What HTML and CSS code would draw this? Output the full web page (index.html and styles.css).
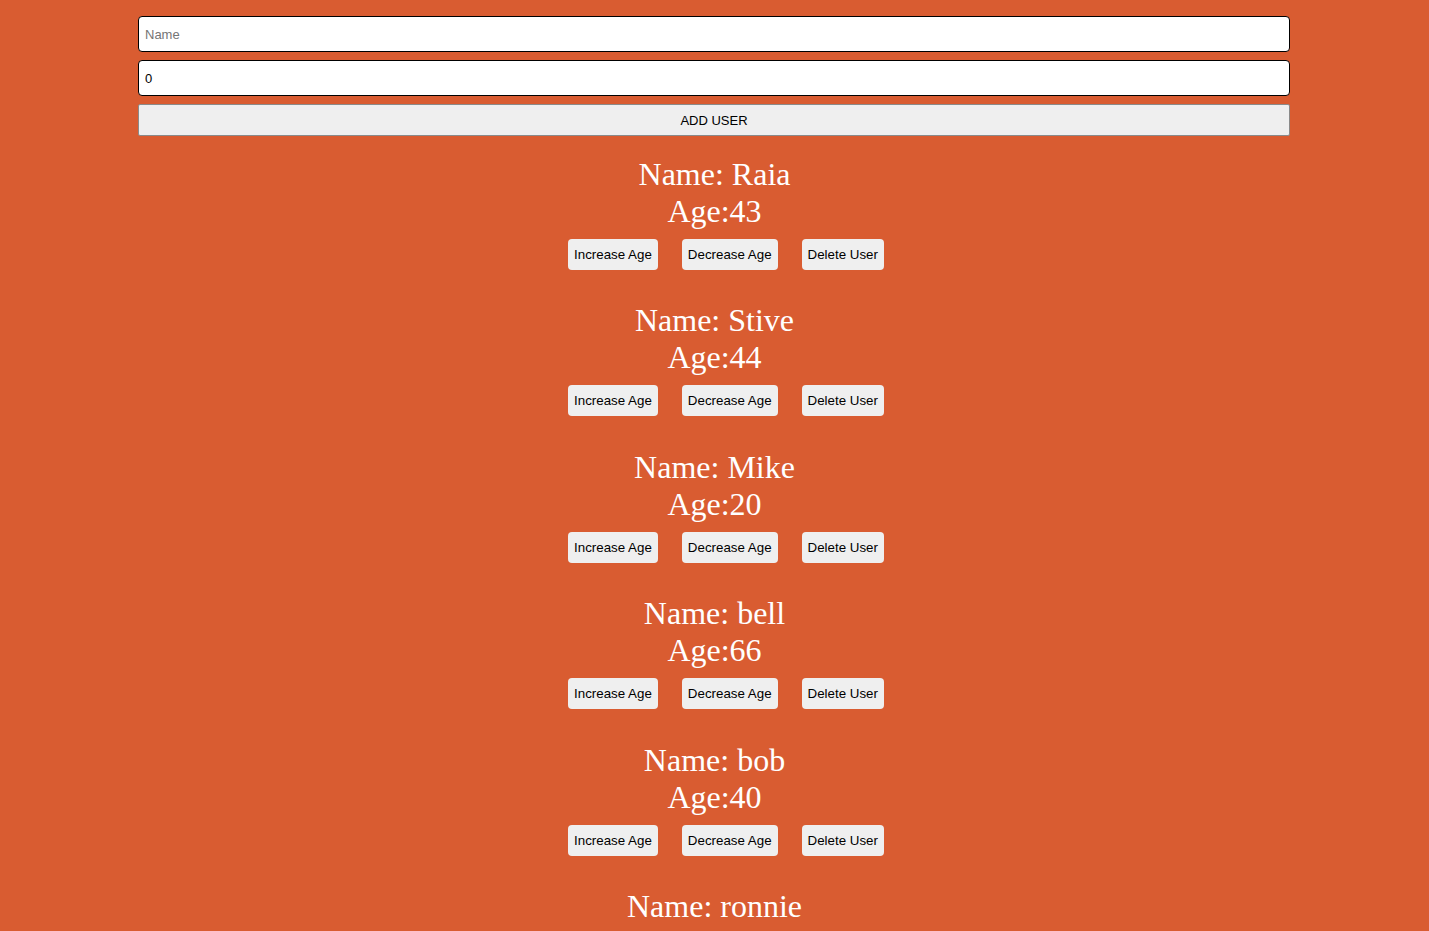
FILE: index.html
```html
<!DOCTYPE html>
<html>
<head>
<meta charset="utf-8">
<link rel="stylesheet" href="styles.css">
</head>
<body>
<div class="app">
  <form class="form">
    <input class="field" type="text" placeholder="Name">
    <input class="field" type="number" value="0">
    <button class="add" type="button">ADD USER</button>
  </form>
  <div class="users">
    <div class="user">
      <div class="line">Name: Raia</div>
      <div class="line">Age:43</div>
      <div class="actions"><button class="btn">Increase Age</button><button class="btn">Decrease Age</button><button class="btn">Delete User</button></div>
    </div>
    <div class="user">
      <div class="line">Name: Stive</div>
      <div class="line">Age:44</div>
      <div class="actions"><button class="btn">Increase Age</button><button class="btn">Decrease Age</button><button class="btn">Delete User</button></div>
    </div>
    <div class="user">
      <div class="line">Name: Mike</div>
      <div class="line">Age:20</div>
      <div class="actions"><button class="btn">Increase Age</button><button class="btn">Decrease Age</button><button class="btn">Delete User</button></div>
    </div>
    <div class="user">
      <div class="line">Name: bell</div>
      <div class="line">Age:66</div>
      <div class="actions"><button class="btn">Increase Age</button><button class="btn">Decrease Age</button><button class="btn">Delete User</button></div>
    </div>
    <div class="user">
      <div class="line">Name: bob</div>
      <div class="line">Age:40</div>
      <div class="actions"><button class="btn">Increase Age</button><button class="btn">Decrease Age</button><button class="btn">Delete User</button></div>
    </div>
    <div class="user">
      <div class="line">Name: ronnie</div>
    </div>
  </div>
</div>
</body>
</html>
```
FILE: styles.css
```css
html, body {
  margin: 0;
  padding: 0;
  background: #d95c31;
}
body {
  font-family: "Liberation Serif", "Times New Roman", serif;
}
.app {
  padding-top: 16px;
}
.form {
  margin: 0 139px 0 138px;
  display: flex;
  flex-direction: column;
  gap: 8px;
}
.field {
  box-sizing: border-box;
  height: 36px;
  margin: 0;
  padding: 0 6px;
  border: 1px solid #000;
  border-radius: 4px;
  background: #fff;
  font-family: "Liberation Sans", Arial, sans-serif;
  font-size: 13px;
  color: #000;
  outline: none;
}
.field::placeholder {
  color: #757575;
}
.field::-webkit-outer-spin-button,
.field::-webkit-inner-spin-button {
  -webkit-appearance: none;
  margin: 0;
}
.add {
  box-sizing: border-box;
  height: 32px;
  margin: 0;
  border: 1px solid #8a8a8a;
  border-radius: 2px;
  background: #efefef;
  font-family: "Liberation Sans", Arial, sans-serif;
  font-size: 13px;
  color: #000;
}
.users {
  display: flex;
  flex-direction: column;
}
.user {
  padding: 19.5px 0 13px;
  text-align: center;
  color: #fff;
}
.line {
  font-size: 32px;
  line-height: 37px;
}
.actions {
  margin-top: 9px;
  padding-left: 23px;
  display: flex;
  justify-content: center;
  gap: 24px;
}
.btn {
  box-sizing: border-box;
  height: 31px;
  margin: 0;
  padding: 0 6px;
  border: none;
  border-radius: 4px;
  background: #efefef;
  font-family: "Liberation Sans", Arial, sans-serif;
  font-size: 13.33px;
  color: #000;
}
```
